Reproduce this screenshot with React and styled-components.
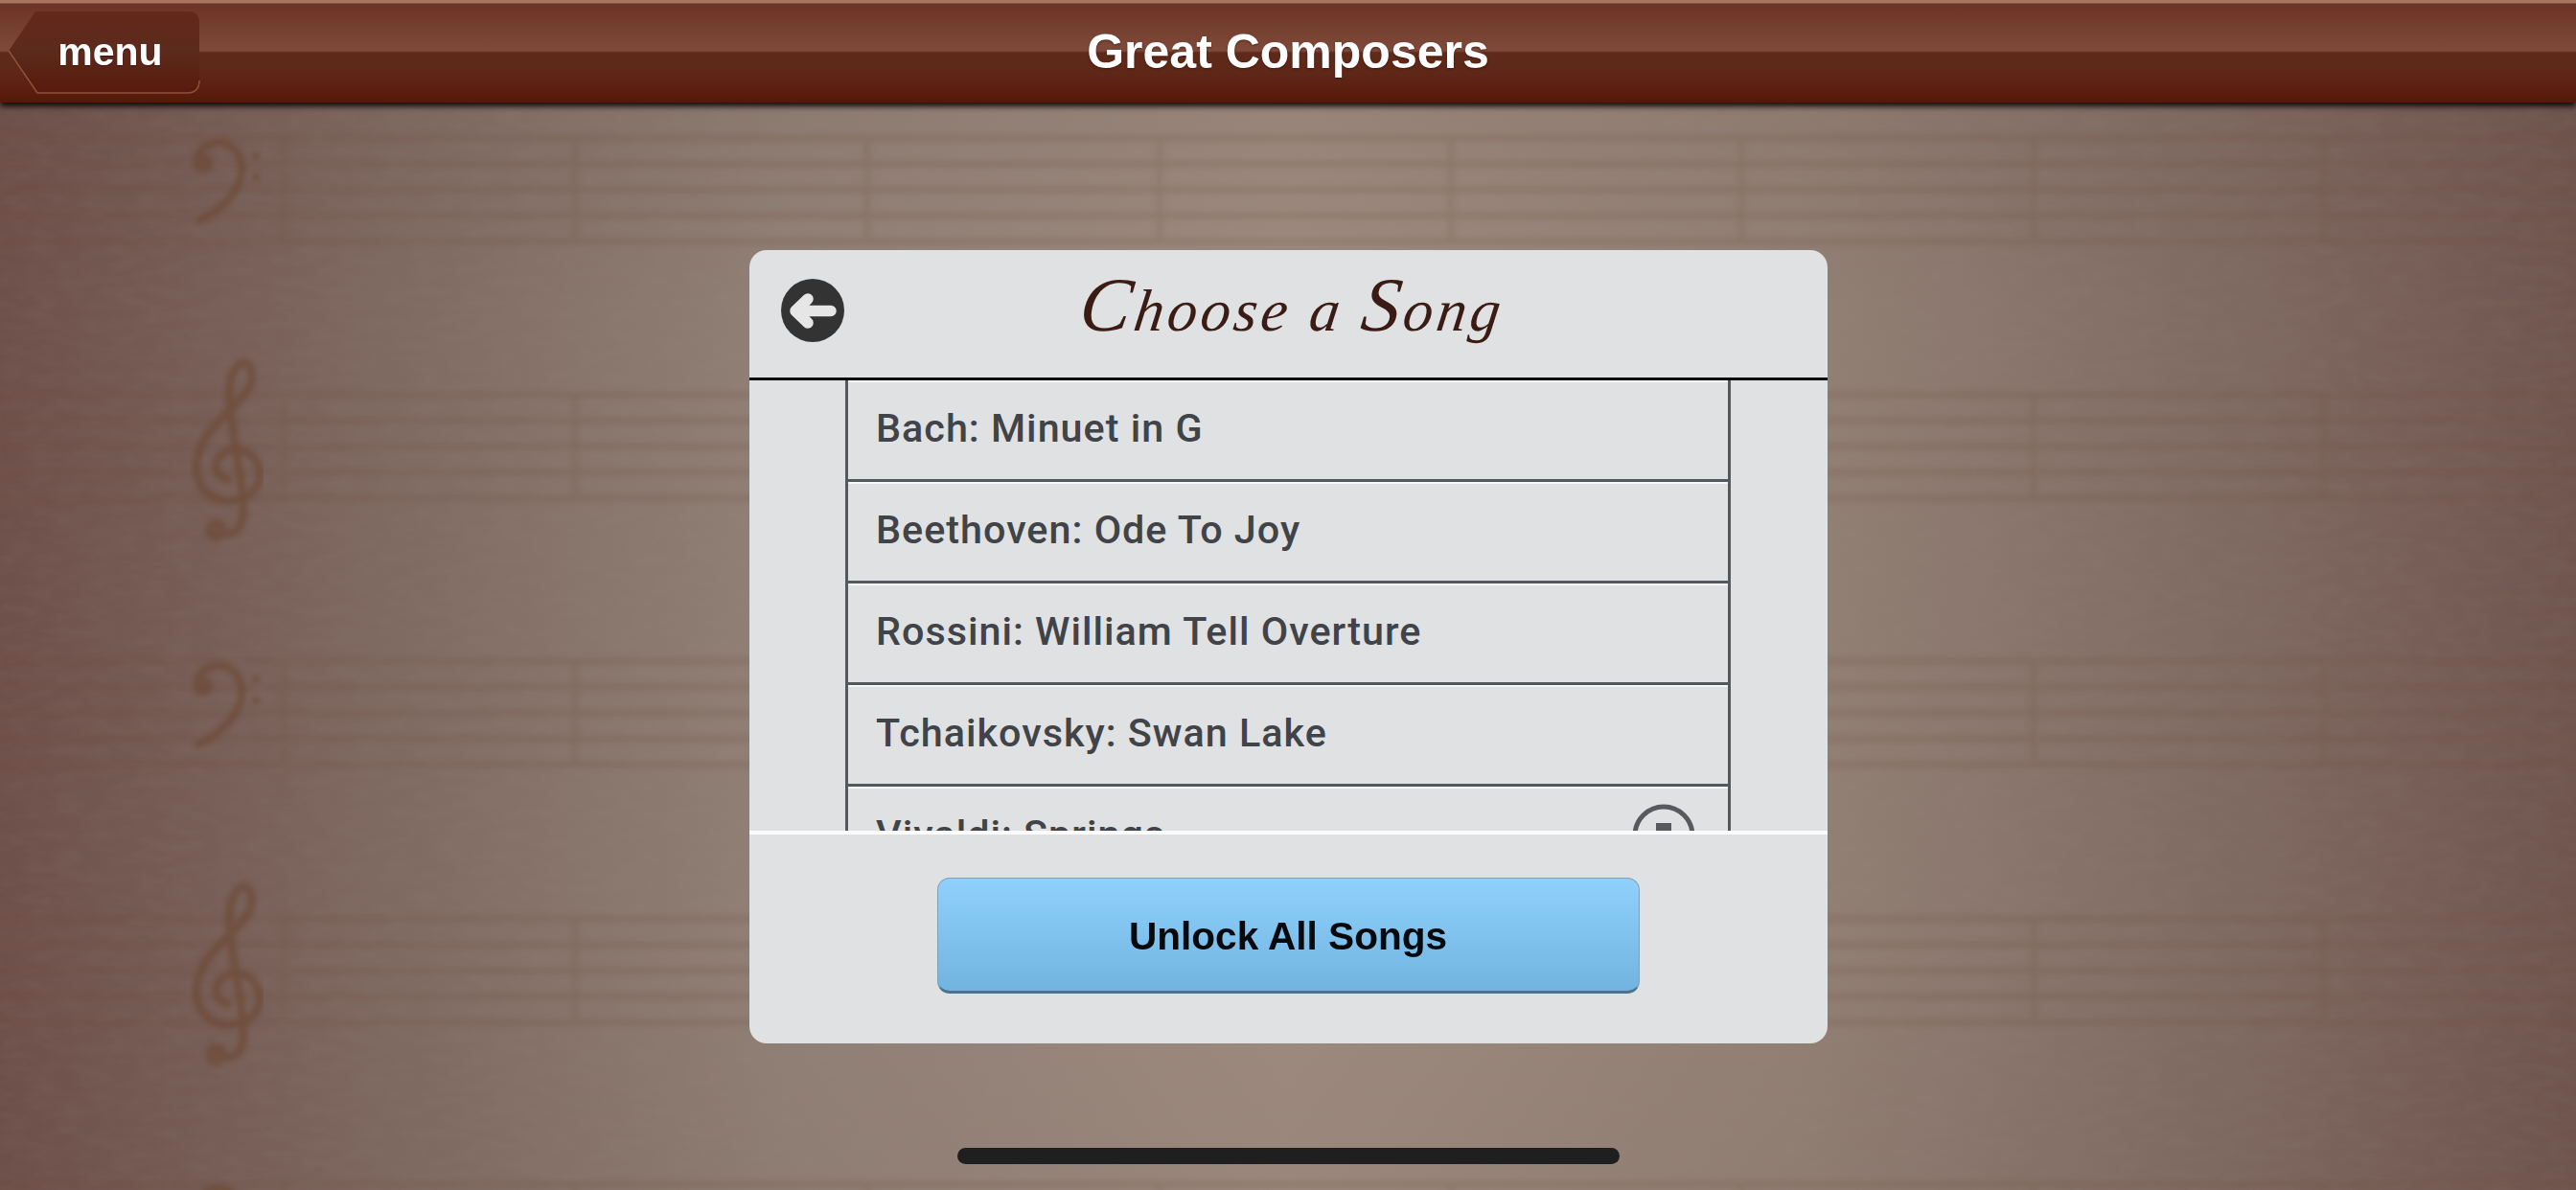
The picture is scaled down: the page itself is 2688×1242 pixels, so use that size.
import React from "react";
import styled, { createGlobalStyle } from "styled-components";

const GlobalStyle = createGlobalStyle`
  * {
    margin: 0;
    padding: 0;
    box-sizing: border-box;
  }
  html, body {
    width: 2688px;
    height: 1242px;
    overflow: hidden;
  }
`;

const Page = styled.div`
  position: relative;
  width: 2688px;
  height: 1242px;
  overflow: hidden;
  display: flex;
  flex-direction: column;
  font-family: "Liberation Sans", Arial, sans-serif;
  background:
    linear-gradient(180deg, rgba(90, 65, 58, 0.14) 0, rgba(90, 65, 58, 0) 26%, rgba(90, 65, 58, 0) 80%, rgba(90, 65, 58, 0.06) 100%),
    linear-gradient(90deg, #6e504a 0, #7e6860 14%, #908076 30%, #9e8b80 50%, #928075 70%, #7e6860 88%, #70554f 100%);
`;

const Staves = styled.svg`
  position: absolute;
  left: 0;
  top: 0;
  width: 2688px;
  height: 1242px;
`;

const NavBar = styled.header`
  position: relative;
  z-index: 2;
  flex: none;
  height: 107px;
  display: grid;
  grid-template-columns: 1fr auto 1fr;
  align-items: center;
  padding: 0 9px;
  background: linear-gradient(
    180deg,
    #a87560 0,
    #a87560 3px,
    #6c3425 4px,
    #7f4a3b 53px,
    #5f2a1a 55px,
    #5e2717 78px,
    #581809 106px
  );
  box-shadow: 0 4px 6px rgba(12, 6, 4, 0.95);
`;

const MenuButton = styled.button`
  position: relative;
  justify-self: start;
  width: 200px;
  height: 87px;
  margin-top: 3px;
  border: 0;
  background: none;
  color: #fff;
  font: bold 41px "Liberation Sans", Arial, sans-serif;
  padding: 0 0 2px 12px;
  text-shadow: 0 1px 1px rgba(40, 10, 0, 0.6);

  span {
    position: relative;
  }
`;

const MenuShape = styled.svg`
  position: absolute;
  left: 0;
  top: 0;
  width: 200px;
  height: 87px;
`;

const NavTitle = styled.h1`
  color: #fff;
  font-size: 50px;
  font-weight: bold;
  line-height: 1;
  text-shadow: 0 1px 2px rgba(40, 10, 0, 0.55);
`;

const Stage = styled.main`
  position: relative;
  z-index: 1;
  flex: 1;
  display: flex;
  align-items: center;
  justify-content: center;
`;

const Dialog = styled.section`
  width: 1125px;
  height: 828px;
  display: flex;
  flex-direction: column;
  overflow: hidden;
  border-radius: 18px;
  background: #e0e1e3;
`;

const DialogHeader = styled.div`
  flex: none;
  height: 136px;
  display: grid;
  grid-template-columns: 1fr auto 1fr;
  align-items: center;
  padding: 0 33px 6px;
  border-bottom: 3px solid #0b0b0b;
`;

const BackIcon = styled.svg`
  width: 66px;
  height: 66px;
`;

const DialogTitle = styled.h2`
  font-family: "Liberation Serif", "Times New Roman", serif;
  font-style: italic;
  font-weight: 400;
  font-size: 62px;
  letter-spacing: 3.8px;
  line-height: 1;
  color: #3a1c14;
  padding-left: 8px;
  transform: skewX(-8deg);
`;

const TitleCap = styled.span`
  font-size: 80px;
  line-height: 0;
`;

const ListArea = styled.div`
  flex: none;
  height: 470px;
  overflow: hidden;
`;

const SongColumn = styled.ul`
  width: 924px;
  margin: 0 auto;
  list-style: none;
  border-left: 3px solid #55585c;
  border-right: 3px solid #55585c;
`;

const SongRow = styled.li`
  height: 106px;
  display: flex;
  align-items: center;
  justify-content: space-between;
  padding: 0 34px 4px 29px;
  border-top: 2px solid #f6f7f8;
  border-bottom: 3px solid #55585c;
  color: #404347;
  font-family: Roboto, "Liberation Sans", sans-serif;
  font-size: 41.3px;
  font-weight: 500;
  letter-spacing: 1px;
`;

const LockIcon = styled.svg`
  width: 66px;
  height: 66px;
  flex: none;
  margin-top: 2px;
`;

const DialogFooter = styled.div`
  flex: 1;
  display: flex;
  align-items: flex-start;
  justify-content: center;
  padding-top: 45px;
  border-top: 4px solid #fbfbfb;
`;

const UnlockButton = styled.button`
  width: 733px;
  height: 121px;
  padding-top: 5px;
  border: 1px solid #7f9fba;
  border-bottom: 3px solid #4d7290;
  border-radius: 13px;
  background: linear-gradient(180deg, #8fd1fc 0, #72b4e0 100%);
  color: #07090c;
  font: bold 40.6px "Liberation Sans", Arial, sans-serif;
`;

const HomeIndicator = styled.div`
  position: absolute;
  z-index: 3;
  left: 999px;
  top: 1198px;
  width: 691px;
  height: 17px;
  border-radius: 9px;
  background: #1f1f1f;
`;

const songs = [
  { name: "Bach: Minuet in G" },
  { name: "Beethoven: Ode To Joy" },
  { name: "Rossini: William Tell Overture" },
  { name: "Tchaikovsky: Swan Lake" },
  { name: "Vivaldi: Springs", locked: true },
];

// staff tops and the clef that starts each one
const staffRows = [
  { y: 144, clef: "bass" },
  { y: 412, clef: "treble" },
  { y: 690, clef: "bass" },
  { y: 959, clef: "treble" },
  { y: 1236, clef: "bass" },
];

const barLines = [296, 600, 905, 1210, 1514, 1817, 2122, 2425];

function BassClef({ y }) {
  return (
    <g transform={`translate(0 ${y - 144})`} fill="#6c452f">
      <path
        d="M205 168C208 148 235 140 248 160C262 185 240 215 208 230"
        fill="none"
        stroke="#6c452f"
        strokeWidth="8"
        strokeLinecap="round"
      />
      <circle cx="212" cy="170" r="10" />
      <circle cx="267" cy="163" r="4" />
      <circle cx="267" cy="185" r="4" />
    </g>
  );
}

function TrebleClef({ y }) {
  return (
    <g transform={`translate(150 ${y - 412 + 340}) scale(0.3333)`}>
      <path
        d="M262 482C222 470 205 425 262 392C320 372 372 420 362 480C350 540 270 570 205 530C160 495 150 430 190 355C225 295 300 250 332 190C350 140 325 100 298 120C265 150 262 210 275 300C290 400 310 500 312 570C312 630 290 660 240 650"
        fill="none"
        stroke="#6c452f"
        strokeWidth="26"
        strokeLinecap="round"
      />
      <circle cx="226" cy="640" r="34" fill="#6c452f" />
    </g>
  );
}

function StaffBackground() {
  return (
    <Staves viewBox="0 0 2688 1242">
      <defs>
        <filter id="soft" x="-5%" y="-5%" width="110%" height="110%">
          <feGaussianBlur stdDeviation="3.2" />
        </filter>
        <filter id="softClef" x="-5%" y="-5%" width="110%" height="110%">
          <feGaussianBlur stdDeviation="2.4" />
        </filter>
        <filter id="paper" x="0" y="0" width="100%" height="100%">
          <feTurbulence type="fractalNoise" baseFrequency="0.035 0.09" numOctaves="3" seed="4" />
          <feColorMatrix values="0 0 0 0 0.32  0 0 0 0 0.26  0 0 0 0 0.22  0.9 0 0 0 -0.3" />
        </filter>
      </defs>
      <rect width="2688" height="1242" filter="url(#paper)" opacity="0.2" />
      <g filter="url(#soft)" stroke="#6f4f3c" opacity="0.24">
        {staffRows.map((row) =>
          [0, 1, 2, 3, 4].map((n) => (
            <line key={`${row.y}-${n}`} x1="0" x2="2688" y1={row.y + n * 27} y2={row.y + n * 27} strokeWidth="6" />
          ))
        )}
        {staffRows.map((row) =>
          barLines.map((x) => (
            <line key={`${row.y}-${x}`} x1={x} x2={x} y1={row.y} y2={row.y + 108} strokeWidth="7" opacity="0.7" />
          ))
        )}
      </g>
      <g filter="url(#softClef)" opacity="0.55">
        {staffRows.map((row) =>
          row.clef === "bass" ? <BassClef key={row.y} y={row.y} /> : <TrebleClef key={row.y} y={row.y} />
        )}
      </g>
    </Staves>
  );
}

export default function App() {
  return (
    <Page>
      <GlobalStyle />
      <StaffBackground />

      <NavBar>
        <MenuButton>
          <MenuShape viewBox="0 0 200 87">
            <defs>
              <linearGradient id="menuFill" x1="0" y1="0" x2="0" y2="1">
                <stop offset="0" stopColor="#63291b" />
                <stop offset="0.48" stopColor="#5c2a1c" />
                <stop offset="1" stopColor="#571b0c" />
              </linearGradient>
            </defs>
            <path d="M28 0H188Q199 0 199 12V72Q199 85 186 85H30L0 41Z" fill="url(#menuFill)" />
            <path d="M0 41L30 85H186Q199 85 199 72" fill="none" stroke="#a2624c" strokeWidth="1.5" opacity="0.75" />
          </MenuShape>
          <span>menu</span>
        </MenuButton>
        <NavTitle>Great Composers</NavTitle>
      </NavBar>

      <Stage>
        <Dialog>
          <DialogHeader>
            <BackIcon viewBox="0 0 66 66">
              <circle cx="33" cy="33" r="33" fill="#333333" />
              <path
                d="M52 33.5H15M28 21L15 33.5L28 46"
                fill="none"
                stroke="#e6e6e6"
                strokeWidth="11.5"
                strokeLinecap="round"
                strokeLinejoin="round"
              />
            </BackIcon>
            <DialogTitle>
              <TitleCap>C</TitleCap>hoose a <TitleCap>S</TitleCap>ong
            </DialogTitle>
          </DialogHeader>

          <ListArea>
            <SongColumn>
              {songs.map((song) => (
                <SongRow key={song.name}>
                  {song.name}
                  {song.locked && (
                    <LockIcon viewBox="0 0 66 66">
                      <circle cx="33" cy="33" r="30" fill="none" stroke="#57595c" strokeWidth="5" />
                      <rect x="25" y="20" width="16" height="24" fill="#57595c" />
                    </LockIcon>
                  )}
                </SongRow>
              ))}
            </SongColumn>
          </ListArea>

          <DialogFooter>
            <UnlockButton>Unlock All Songs</UnlockButton>
          </DialogFooter>
        </Dialog>
      </Stage>

      <HomeIndicator />
    </Page>
  );
}
